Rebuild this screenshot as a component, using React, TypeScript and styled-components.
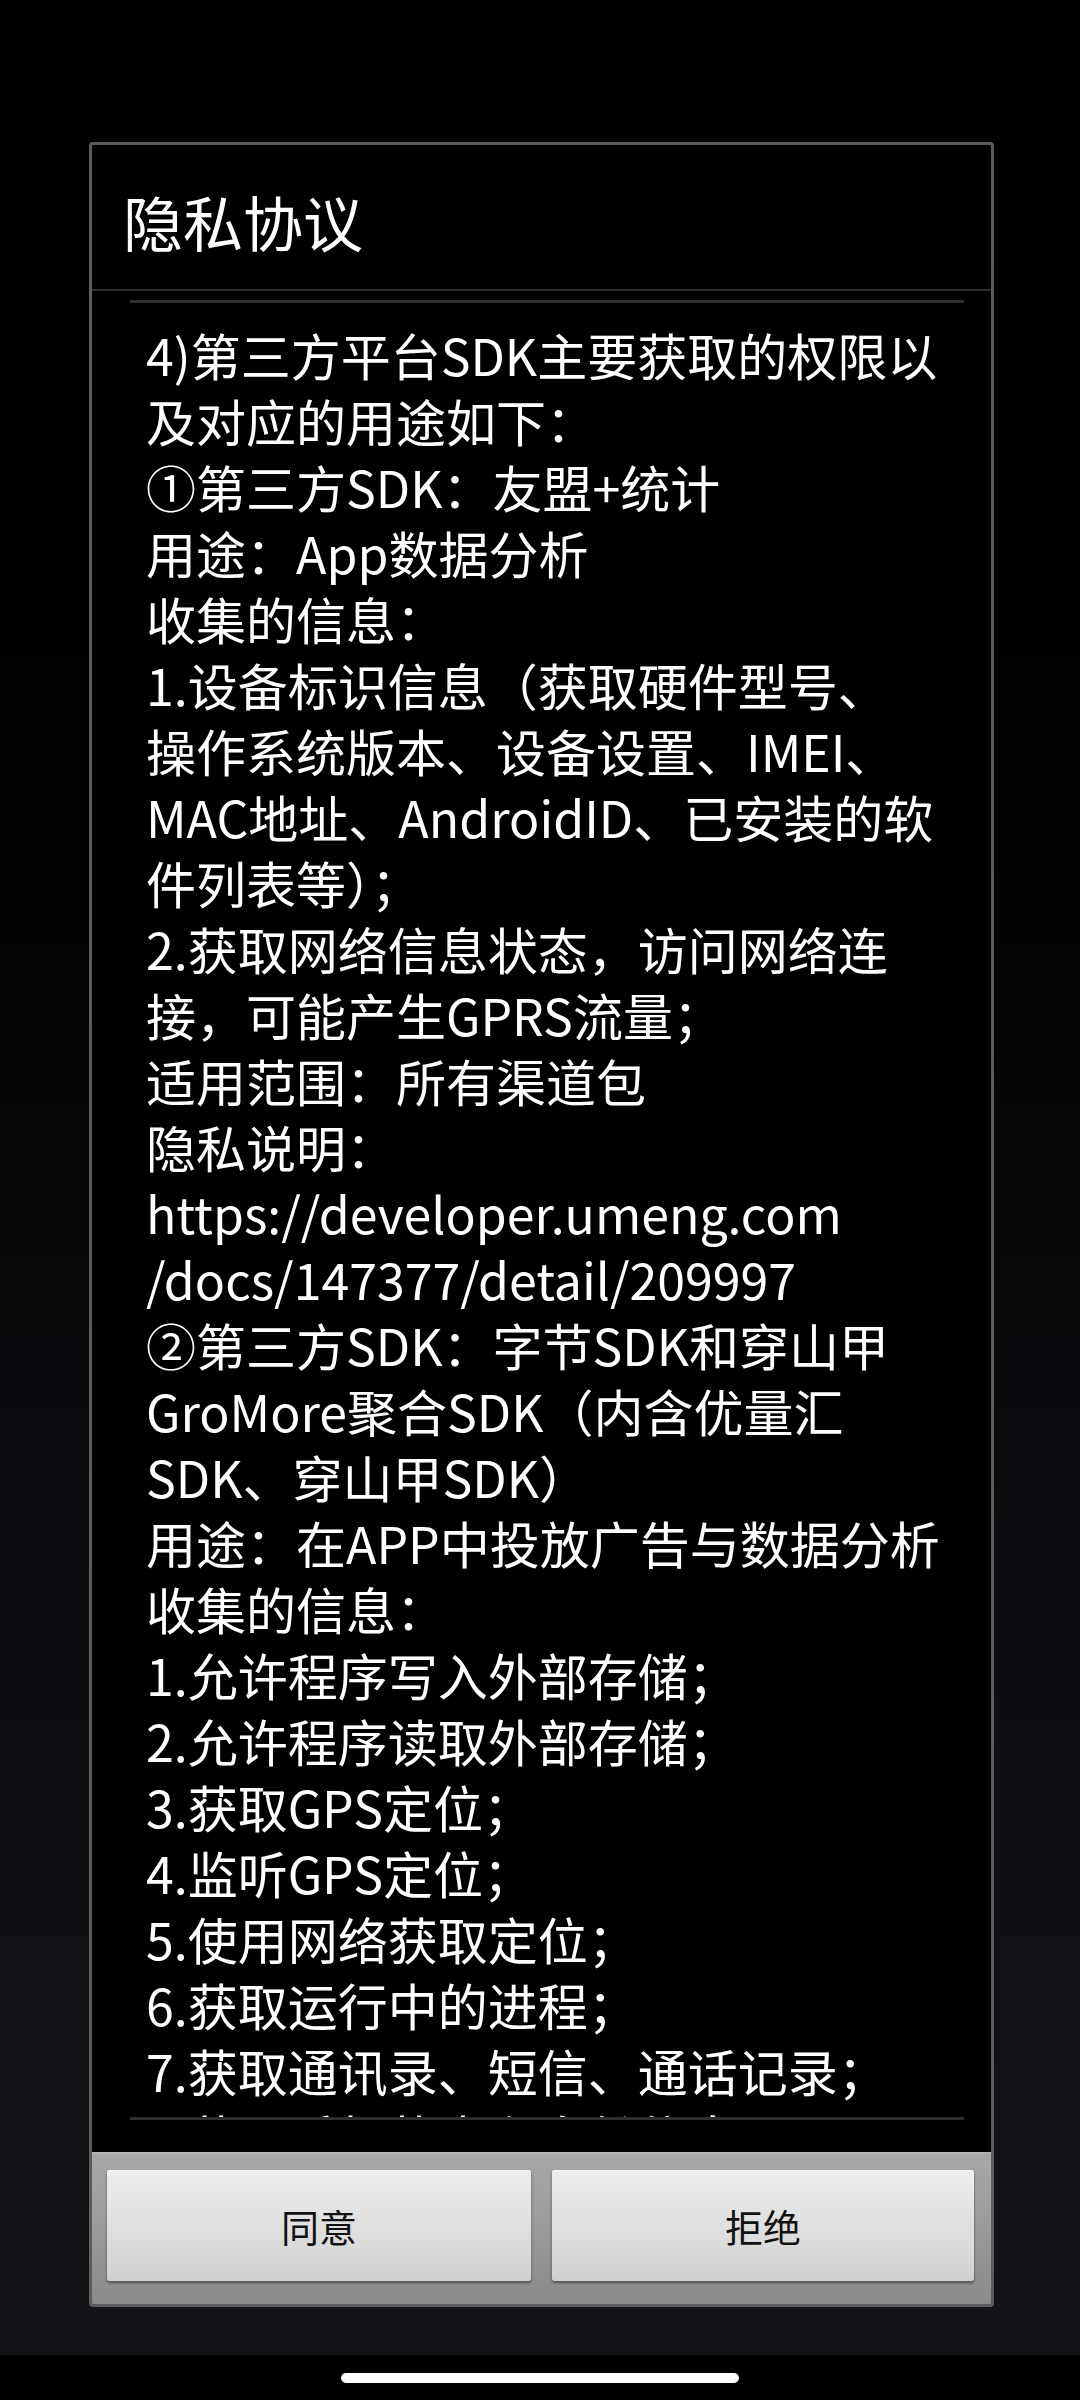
import React from "react";
import styled, { createGlobalStyle } from "styled-components";

const GlobalStyle = createGlobalStyle`
  html, body {
    margin: 0;
    padding: 0;
    background: #000;
  }
  * {
    box-sizing: border-box;
  }
`;

const Screen = styled.div`
  width: 1080px;
  height: 2400px;
  display: flex;
  flex-direction: column;
  font-family: "Noto Sans CJK SC", "Noto Sans", sans-serif;
  background: #000;
  overflow: hidden;
`;

const Stage = styled.div`
  flex: 1;
  padding: 142px 86px 0 89px;
  background: linear-gradient(to bottom, #000 0%, #020203 35%, #0d0f12 75%, #121417 100%);
`;

const Dialog = styled.div`
  display: flex;
  flex-direction: column;
  border: 3px solid #5c5c5c;
  border-radius: 4px;
  background: #000;
  overflow: hidden;
`;

const Title = styled.div`
  height: 144px;
  display: flex;
  align-items: center;
  padding: 6px 0 0 31px;
  font-size: 60px;
  color: #fff;
`;

const TitleDivider = styled.div`
  height: 2px;
  background: #2c2c2c;
`;

const Body = styled.div`
  padding: 9px 27px 32px 38px;
`;

const ScrollFrame = styled.div`
  position: relative;
  border-top: 3px solid #2e2e2e;
  height: 1820px;
  overflow: hidden;

  &::after {
    content: "";
    position: absolute;
    left: 0;
    right: 0;
    bottom: 0;
    height: 3px;
    background: #2e2e2e;
  }
`;

const TextBlock = styled.div`
  padding: 18px 0 0 16px;
  color: #fff;
  font-size: 50px;
  line-height: 66px;
`;

const Line = styled.div`
  white-space: nowrap;
`;

const ButtonBar = styled.div`
  display: grid;
  grid-template-columns: 424px 422px;
  gap: 21px;
  padding: 16px 17px 23px 15px;
  background: linear-gradient(to bottom, #a8a8a8 0%, #9a9a9a 50%, #8a8a8a 100%);
  border-top: 2px solid #b4b4b4;
`;

const DialogButton = styled.button`
  height: 111px;
  border: none;
  border-radius: 3px;
  background: linear-gradient(to bottom, #ededed 0%, #dedede 55%, #d0d0d0 100%);
  box-shadow: 0 2px 3px rgba(0, 0, 0, 0.45), inset 0 1px 0 #f6f6f6;
  font-family: "Noto Sans CJK SC", "Noto Sans", sans-serif;
  font-size: 38px;
  color: #111;
  padding: 0;
`;

const NavBar = styled.div`
  height: 45px;
  background: #000;
  display: flex;
  justify-content: center;
  padding-top: 18px;
`;

const HomePill = styled.div`
  width: 398px;
  height: 10px;
  border-radius: 5px;
  background: #fff;
`;

const lines = [
  "4)第三方平台SDK主要获取的权限以",
  "及对应的用途如下：",
  "①第三方SDK：友盟+统计",
  "用途：App数据分析",
  "收集的信息：",
  "1.设备标识信息（获取硬件型号、",
  "操作系统版本、设备设置、IMEI、",
  "MAC地址、AndroidID、已安装的软",
  "件列表等）；",
  "2.获取网络信息状态，访问网络连",
  "接，可能产生GPRS流量；",
  "适用范围：所有渠道包",
  "隐私说明：",
  "https://developer.umeng.com",
  "/docs/147377/detail/209997",
  "②第三方SDK：字节SDK和穿山甲",
  "GroMore聚合SDK（内含优量汇",
  "SDK、穿山甲SDK）",
  "用途：在APP中投放广告与数据分析",
  "收集的信息：",
  "1.允许程序写入外部存储；",
  "2.允许程序读取外部存储；",
  "3.获取GPS定位；",
  "4.监听GPS定位；",
  "5.使用网络获取定位；",
  "6.获取运行中的进程；",
  "7.获取通讯录、短信、通话记录；",
  "8.获取手机状态和身份信息；",
];

const App = () => {
  return (
    <>
      <GlobalStyle />
      <Screen>
        <Stage>
          <Dialog>
            <Title>隐私协议</Title>
            <TitleDivider />
            <Body>
              <ScrollFrame>
                <TextBlock>
                  {lines.map((line, i) => (
                    <Line key={i}>{line}</Line>
                  ))}
                </TextBlock>
              </ScrollFrame>
            </Body>
            <ButtonBar>
              <DialogButton>同意</DialogButton>
              <DialogButton>拒绝</DialogButton>
            </ButtonBar>
          </Dialog>
        </Stage>
        <NavBar>
          <HomePill />
        </NavBar>
      </Screen>
    </>
  );
};

export default App;
